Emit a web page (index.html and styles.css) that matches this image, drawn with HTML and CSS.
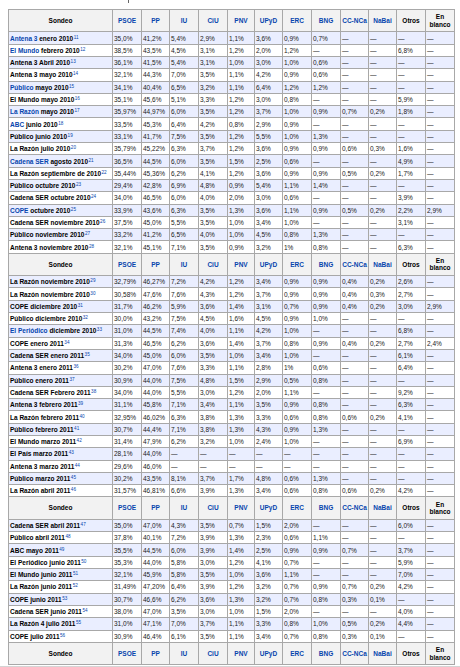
FILE: index.html
```html
<!DOCTYPE html>
<html lang="es">
<head>
<meta charset="utf-8">
<title>Sondeos</title>
<link rel="stylesheet" href="styles.css">
</head>
<body>
<div class="page">
<div class="top"><span class="tick"></span></div>
<table class="wikitable">
<colgroup>
<col class="c-s"><col class="c29"><col class="c28"><col class="c29"><col class="c29"><col class="c27"><col class="c28"><col class="c29"><col class="c29"><col class="c28"><col class="c28"><col class="c29"><col class="c29">
</colgroup>
<tbody>
<tr class="hd"><th>Sondeo</th><th class="p">PSOE</th><th class="p">PP</th><th class="p">IU</th><th class="p">CiU</th><th class="p">PNV</th><th class="p">UPyD</th><th class="p">ERC</th><th class="p">BNG</th><th class="p">CC-NCa</th><th class="p">NaBai</th><th>Otros</th><th>En<br>blanco</th></tr>
<tr><th><a>Antena 3</a> enero 2010<sup>11</sup></th><td>35,0%</td><td>41,2%</td><td>5,4%</td><td>2,9%</td><td>1,1%</td><td>3,6%</td><td>0,9%</td><td>0,7%</td><td>—</td><td>—</td><td>—</td><td>—</td></tr>
<tr><th><a>El Mundo</a> febrero 2010<sup>12</sup></th><td>38,5%</td><td>43,5%</td><td>4,5%</td><td>3,1%</td><td>1,2%</td><td>2,0%</td><td>1,2%</td><td>—</td><td>—</td><td>—</td><td>6,8%</td><td>—</td></tr>
<tr><th>Antena 3 Abril 2010<sup>13</sup></th><td>36,1%</td><td>41,5%</td><td>5,4%</td><td>3,1%</td><td>1,0%</td><td>3,0%</td><td>1,0%</td><td>0,6%</td><td>—</td><td>—</td><td>—</td><td>—</td></tr>
<tr><th>Antena 3 mayo 2010<sup>14</sup></th><td>32,1%</td><td>44,3%</td><td>7,0%</td><td>3,5%</td><td>1,1%</td><td>4,2%</td><td>0,9%</td><td>0,6%</td><td>—</td><td>—</td><td>—</td><td>—</td></tr>
<tr><th><a>Público</a> mayo 2010<sup>15</sup></th><td>34,1%</td><td>40,4%</td><td>6,5%</td><td>3,2%</td><td>1,1%</td><td>6,4%</td><td>1,2%</td><td>1,2%</td><td>—</td><td>—</td><td>—</td><td>—</td></tr>
<tr><th>El Mundo mayo 2010<sup>16</sup></th><td>35,1%</td><td>45,6%</td><td>5,1%</td><td>3,3%</td><td>1,2%</td><td>3,0%</td><td>0,8%</td><td>—</td><td>—</td><td>—</td><td>5,9%</td><td>—</td></tr>
<tr><th><a>La Razón</a> mayo 2010<sup>17</sup></th><td>35,97%</td><td>44,97%</td><td>6,0%</td><td>3,5%</td><td>1,2%</td><td>3,7%</td><td>1,0%</td><td>0,9%</td><td>0,7%</td><td>0,2%</td><td>1,8%</td><td>—</td></tr>
<tr><th><a>ABC</a> junio 2010<sup>18</sup></th><td>33,5%</td><td>45,3%</td><td>6,4%</td><td>4,2%</td><td>0,8%</td><td>2,9%</td><td>0,9%</td><td>—</td><td>—</td><td>—</td><td>—</td><td>—</td></tr>
<tr><th>Público junio 2010<sup>19</sup></th><td>33,1%</td><td>41,7%</td><td>7,5%</td><td>3,5%</td><td>1,2%</td><td>5,5%</td><td>1,0%</td><td>1,3%</td><td>—</td><td>—</td><td>—</td><td>—</td></tr>
<tr><th>La Razón julio 2010<sup>20</sup></th><td>35,79%</td><td>45,22%</td><td>6,3%</td><td>3,7%</td><td>1,2%</td><td>3,6%</td><td>0,9%</td><td>0,9%</td><td>0,6%</td><td>0,3%</td><td>1,6%</td><td>—</td></tr>
<tr><th><a>Cadena SER</a> agosto 2010<sup>21</sup></th><td>36,5%</td><td>44,5%</td><td>6,0%</td><td>3,5%</td><td>1,5%</td><td>2,5%</td><td>0,6%</td><td>—</td><td>—</td><td>—</td><td>4,9%</td><td>—</td></tr>
<tr><th>La Razón septiembre de 2010<sup>22</sup></th><td>35,44%</td><td>45,36%</td><td>6,2%</td><td>4,1%</td><td>1,2%</td><td>3,6%</td><td>0,9%</td><td>0,9%</td><td>0,5%</td><td>0,2%</td><td>1,7%</td><td>—</td></tr>
<tr><th>Público octubre 2010<sup>23</sup></th><td>29,4%</td><td>42,8%</td><td>6,9%</td><td>4,8%</td><td>0,9%</td><td>5,4%</td><td>1,1%</td><td>1,4%</td><td>—</td><td>—</td><td>—</td><td>—</td></tr>
<tr><th>Cadena SER octubre 2010<sup>24</sup></th><td>34,0%</td><td>46,5%</td><td>6,0%</td><td>4,0%</td><td>2,0%</td><td>3,0%</td><td>0,6%</td><td>—</td><td>—</td><td>—</td><td>3,9%</td><td>—</td></tr>
<tr><th><a>COPE</a> octubre 2010<sup>25</sup></th><td>33,9%</td><td>43,6%</td><td>6,3%</td><td>3,5%</td><td>1,3%</td><td>3,6%</td><td>1,1%</td><td>0,9%</td><td>0,5%</td><td>0,2%</td><td>2,2%</td><td>2,9%</td></tr>
<tr><th>Cadena SER noviembre 2010<sup>26</sup></th><td>37,5%</td><td>45,0%</td><td>5,5%</td><td>3,5%</td><td>1,0%</td><td>3,4%</td><td>1,0%</td><td>—</td><td>—</td><td>—</td><td>3,1%</td><td>—</td></tr>
<tr><th>Público noviembre 2010<sup>27</sup></th><td>33,2%</td><td>41,2%</td><td>6,5%</td><td>4,0%</td><td>1,0%</td><td>4,5%</td><td>0,8%</td><td>1,3%</td><td>—</td><td>—</td><td>—</td><td>—</td></tr>
<tr><th>Antena 3 noviembre 2010<sup>28</sup></th><td>32,1%</td><td>45,1%</td><td>7,1%</td><td>3,5%</td><td>0,9%</td><td>3,2%</td><td>1%</td><td>0,8%</td><td>—</td><td>—</td><td>6,3%</td><td>—</td></tr>
</tbody>
<tbody>
<tr class="hd"><th>Sondeo</th><th class="p">PSOE</th><th class="p">PP</th><th class="p">IU</th><th class="p">CiU</th><th class="p">PNV</th><th class="p">UPyD</th><th class="p">ERC</th><th class="p">BNG</th><th class="p">CC-NCa</th><th class="p">NaBai</th><th>Otros</th><th>En<br>blanco</th></tr>
<tr><th>La Razón noviembre 2010<sup>29</sup></th><td>32,79%</td><td>46,27%</td><td>7,2%</td><td>4,2%</td><td>1,2%</td><td>3,4%</td><td>0,9%</td><td>0,9%</td><td>0,4%</td><td>0,2%</td><td>2,6%</td><td>—</td></tr>
<tr><th>La Razón noviembre 2010<sup>30</sup></th><td>30,58%</td><td>47,6%</td><td>7,6%</td><td>4,3%</td><td>1,2%</td><td>3,7%</td><td>0,9%</td><td>0,9%</td><td>0,4%</td><td>0,3%</td><td>2,7%</td><td>—</td></tr>
<tr><th>COPE diciembre 2010<sup>31</sup></th><td>31,7%</td><td>46,2%</td><td>5,9%</td><td>3,6%</td><td>1,4%</td><td>3,1%</td><td>0,7%</td><td>0,9%</td><td>0,4%</td><td>0,2%</td><td>3,0%</td><td>2,9%</td></tr>
<tr><th>Público diciembre 2010<sup>32</sup></th><td>30,0%</td><td>43,2%</td><td>7,5%</td><td>4,5%</td><td>1,6%</td><td>4,5%</td><td>0,9%</td><td>1,0%</td><td>—</td><td>—</td><td>—</td><td>—</td></tr>
<tr><th><a>El Periódico</a> diciembre 2010<sup>33</sup></th><td>31,0%</td><td>44,5%</td><td>7,4%</td><td>4,0%</td><td>1,1%</td><td>4,2%</td><td>1,0%</td><td>—</td><td>—</td><td>—</td><td>6,8%</td><td>—</td></tr>
<tr><th>COPE enero 2011<sup>34</sup></th><td>31,3%</td><td>46,5%</td><td>6,2%</td><td>3,6%</td><td>1,4%</td><td>3,7%</td><td>0,8%</td><td>0,9%</td><td>0,4%</td><td>0,2%</td><td>2,7%</td><td>2,4%</td></tr>
<tr><th>Cadena SER enero 2011<sup>35</sup></th><td>34,0%</td><td>45,0%</td><td>6,0%</td><td>3,5%</td><td>1,0%</td><td>3,4%</td><td>1,0%</td><td>—</td><td>—</td><td>—</td><td>6,1%</td><td>—</td></tr>
<tr><th>Antena 3 enero 2011<sup>36</sup></th><td>30,2%</td><td>47,0%</td><td>7,6%</td><td>3,3%</td><td>1,1%</td><td>2,8%</td><td>1%</td><td>0,6%</td><td>—</td><td>—</td><td>6,4%</td><td>—</td></tr>
<tr><th>Público enero 2011<sup>37</sup></th><td>30,9%</td><td>44,0%</td><td>7,5%</td><td>4,8%</td><td>1,5%</td><td>2,9%</td><td>0,5%</td><td>0,8%</td><td>—</td><td>—</td><td>—</td><td>—</td></tr>
<tr><th>Cadena SER Febrero 2011<sup>38</sup></th><td>34,0%</td><td>44,0%</td><td>5,5%</td><td>3,0%</td><td>1,2%</td><td>2,0%</td><td>1,1%</td><td>—</td><td>—</td><td>—</td><td>9,2%</td><td>—</td></tr>
<tr><th>Antena 3 febrero 2011<sup>39</sup></th><td>31,1%</td><td>45,8%</td><td>7,1%</td><td>3,4%</td><td>1,1%</td><td>3,5%</td><td>0,9%</td><td>0,8%</td><td>—</td><td>—</td><td>6,3%</td><td>—</td></tr>
<tr><th>La Razón febrero 2011<sup>40</sup></th><td>32,95%</td><td>46,02%</td><td>6,3%</td><td>3,8%</td><td>1,3%</td><td>3,3%</td><td>0,6%</td><td>0,8%</td><td>0,6%</td><td>0,2%</td><td>4,1%</td><td>—</td></tr>
<tr><th>Público febrero 2011<sup>41</sup></th><td>30,7%</td><td>44,4%</td><td>7,1%</td><td>3,8%</td><td>1,3%</td><td>4,3%</td><td>0,9%</td><td>1,3%</td><td>—</td><td>—</td><td>—</td><td>—</td></tr>
<tr><th>El Mundo marzo 2011<sup>42</sup></th><td>31,4%</td><td>47,9%</td><td>6,2%</td><td>3,2%</td><td>1,0%</td><td>2,4%</td><td>1,0%</td><td>—</td><td>—</td><td>—</td><td>6,9%</td><td>—</td></tr>
<tr><th>El País marzo 2011<sup>43</sup></th><td>28,1%</td><td>44,0%</td><td>—</td><td>—</td><td>—</td><td>—</td><td>—</td><td>—</td><td>—</td><td>—</td><td>—</td><td>—</td></tr>
<tr><th>Antena 3 marzo 2011<sup>44</sup></th><td>29,6%</td><td>46,0%</td><td>—</td><td>—</td><td>—</td><td>—</td><td>—</td><td>—</td><td>—</td><td>—</td><td>—</td><td>—</td></tr>
<tr><th>Público marzo 2011<sup>45</sup></th><td>30,2%</td><td>43,5%</td><td>8,1%</td><td>3,7%</td><td>1,7%</td><td>4,8%</td><td>0,6%</td><td>1,3%</td><td>—</td><td>—</td><td>—</td><td>—</td></tr>
<tr><th>La Razón abril 2011<sup>46</sup></th><td>31,57%</td><td>46,81%</td><td>6,6%</td><td>3,9%</td><td>1,3%</td><td>3,4%</td><td>0,6%</td><td>0,8%</td><td>0,6%</td><td>0,2%</td><td>4,2%</td><td>—</td></tr>
</tbody>
<tbody>
<tr class="hd"><th>Sondeo</th><th class="p">PSOE</th><th class="p">PP</th><th class="p">IU</th><th class="p">CiU</th><th class="p">PNV</th><th class="p">UPyD</th><th class="p">ERC</th><th class="p">BNG</th><th class="p">CC-NCa</th><th class="p">NaBai</th><th>Otros</th><th>En<br>blanco</th></tr>
<tr><th>Cadena SER abril 2011<sup>47</sup></th><td>35,0%</td><td>47,0%</td><td>4,3%</td><td>3,5%</td><td>0,7%</td><td>1,5%</td><td>2,0%</td><td>—</td><td>—</td><td>—</td><td>6,0%</td><td>—</td></tr>
<tr><th>Público abril 2011<sup>48</sup></th><td>37,8%</td><td>40,1%</td><td>7,2%</td><td>3,9%</td><td>1,3%</td><td>2,3%</td><td>0,6%</td><td>1,1%</td><td>—</td><td>—</td><td>—</td><td>—</td></tr>
<tr><th>ABC mayo 2011<sup>49</sup></th><td>35,5%</td><td>44,5%</td><td>6,0%</td><td>3,9%</td><td>1,4%</td><td>2,5%</td><td>0,9%</td><td>0,9%</td><td>0,7%</td><td>—</td><td>3,7%</td><td>—</td></tr>
<tr><th>El Periódico junio 2011<sup>50</sup></th><td>35,3%</td><td>44,0%</td><td>5,8%</td><td>3,0%</td><td>1,2%</td><td>4,1%</td><td>0,7%</td><td>—</td><td>—</td><td>—</td><td>5,9%</td><td>—</td></tr>
<tr><th>El Mundo junio 2011<sup>51</sup></th><td>32,1%</td><td>45,9%</td><td>5,8%</td><td>3,5%</td><td>1,0%</td><td>3,6%</td><td>1,1%</td><td>—</td><td>—</td><td>—</td><td>7,0%</td><td>—</td></tr>
<tr><th>La Razón junio 2011<sup>52</sup></th><td>31,49%</td><td>47,20%</td><td>6,4%</td><td>3,9%</td><td>1,2%</td><td>3,2%</td><td>0,7%</td><td>0,9%</td><td>0,7%</td><td>0,2%</td><td>4,2%</td><td>—</td></tr>
<tr><th>COPE junio 2011<sup>53</sup></th><td>30,7%</td><td>46,6%</td><td>6,2%</td><td>3,6%</td><td>1,3%</td><td>3,2%</td><td>0,7%</td><td>0,8%</td><td>0,3%</td><td>0,1%</td><td>—</td><td>—</td></tr>
<tr><th>Cadena SER junio 2011<sup>54</sup></th><td>38,0%</td><td>47,0%</td><td>3,5%</td><td>3,0%</td><td>1,0%</td><td>1,5%</td><td>2,0%</td><td>—</td><td>—</td><td>—</td><td>4,0%</td><td>—</td></tr>
<tr><th>La Razón 4 julio 2011<sup>55</sup></th><td>31,0%</td><td>47,1%</td><td>7,0%</td><td>3,7%</td><td>1,1%</td><td>3,3%</td><td>0,8%</td><td>1,0%</td><td>0,5%</td><td>0,2%</td><td>4,4%</td><td>—</td></tr>
<tr><th>COPE julio 2011<sup>56</sup></th><td>30,9%</td><td>46,4%</td><td>6,1%</td><td>3,5%</td><td>1,1%</td><td>3,4%</td><td>0,7%</td><td>0,8%</td><td>0,3%</td><td>0,1%</td><td>—</td><td>—</td></tr>
</tbody>
<tbody>
<tr class="hd"><th>Sondeo</th><th class="p">PSOE</th><th class="p">PP</th><th class="p">IU</th><th class="p">CiU</th><th class="p">PNV</th><th class="p">UPyD</th><th class="p">ERC</th><th class="p">BNG</th><th class="p">CC-NCa</th><th class="p">NaBai</th><th>Otros</th><th>En<br>blanco</th></tr>
</tbody>
</table>
</div>
<div class="bottom"></div>
</body>
</html>
```

FILE: styles.css
```css
html, body {
  margin: 0;
  padding: 0;
  background: #fff;
  font-family: "Liberation Sans", Arial, sans-serif;
}

.page {
  padding: 0 6px 0 8px;
}

.top {
  height: 9px;
  display: flex;
  align-items: flex-start;
}

.tick {
  margin-left: 120px;
  width: 1px;
  height: 3px;
  background: #666;
}

.wikitable {
  border-collapse: collapse;
  table-layout: fixed;
  width: 446px;
  font-size: 6.5px;
  color: #1a1a1a;
  border: 1px solid #a8a8a8;
}

.c-s { width: 104px; }
.c27 { width: 27px; }
.c28 { width: 28px; }
.c29 { width: 29px; }

.wikitable th,
.wikitable td {
  border: 1px solid #a8a8a8;
  padding: 0 1px;
  height: 11.3px;
  line-height: 7px;
  white-space: nowrap;
  overflow: hidden;
  text-align: left;
  vertical-align: middle;
}

.wikitable th {
  font-weight: bold;
  color: #000;
}

.wikitable tr.hd th {
  background: #f2f2f2;
  height: 21.4px;
  text-align: center;
  line-height: 7.5px;
}

.wikitable tr.hd th.p {
  color: #0645ad;
}

.wikitable tbody tr:nth-child(even) {
  background: #eaeeff;
}

.wikitable a {
  color: #0645ad;
  text-decoration: none;
}

.wikitable sup {
  font-size: 4.6px;
  color: #0645ad;
  font-weight: normal;
  vertical-align: 2px;
  line-height: 0;
  margin-left: 0.5px;
}

.bottom {
  margin-top: 1px;
  height: 4px;
  background: #d4d4d4;
}
```
